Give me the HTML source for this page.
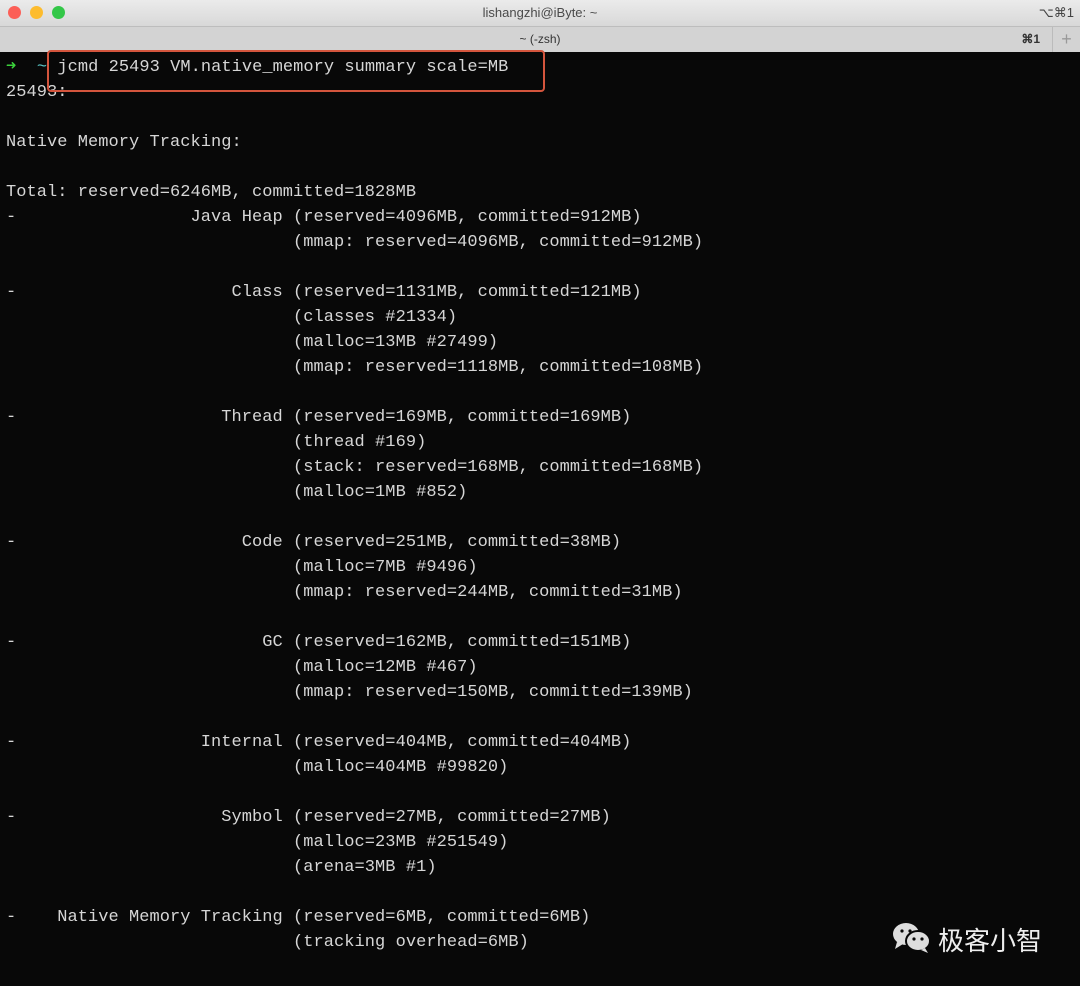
<!DOCTYPE html>
<html><head><meta charset="utf-8"><style>
html,body{margin:0;padding:0;width:1080px;height:986px;overflow:hidden;background:#0a0a0a}
.title{position:absolute;left:0;top:0;width:1080px;height:26px;background:linear-gradient(#ebebeb,#d8d8d8);font:13px "Liberation Sans",sans-serif;color:#4a4a4a;text-align:center;line-height:26px}
.dot{position:absolute;top:6px;width:13px;height:13px;border-radius:50%}
.tabs{position:absolute;left:0;top:26px;width:1080px;height:25px;background:#d3d3d3;border-top:1px solid #bdbdbd;border-bottom:1px solid #a8a8a8;font:12px "Liberation Sans",sans-serif;color:#333;line-height:25px;text-align:center}
.term{position:absolute;left:0;top:52px;width:1080px;height:934px;background:#080808}
pre{position:absolute;left:6px;top:3px;margin:0;font:17px/25px "Liberation Mono",monospace;color:#d6d6d6;letter-spacing:0.05px}
.box{position:absolute;left:47px;top:50px;width:494px;height:38px;border:2px solid #d4553d;border-radius:4px}
.wm{position:absolute;left:938px;top:921px;font:26px "Liberation Sans","Noto Sans CJK SC",sans-serif;color:#eee}
</style></head><body>
<div class="title">lishangzhi@iByte: ~
<div class="dot" style="left:8px;background:#fc5f57"></div>
<div class="dot" style="left:30px;background:#fdbc2e"></div>
<div class="dot" style="left:52px;background:#33c748"></div>
<span style="position:absolute;right:6px;top:0;color:#444">⌥⌘1</span></div>
<div class="tabs">~ (-zsh)<span style="position:absolute;right:40px;top:0;font-weight:bold">⌘1</span><span style="position:absolute;right:0;top:0;width:27px;height:25px;border-left:1px solid #bbb;color:#999;font-size:18px">+</span></div>
<div class="term">
<pre><span style="color:#3bd13b">➜</span>  <span style="color:#5ac7c7">~</span> jcmd 25493 VM.native_memory summary scale=MB
25493:

Native Memory Tracking:

Total: reserved=6246MB, committed=1828MB
-                 Java Heap (reserved=4096MB, committed=912MB)
                            (mmap: reserved=4096MB, committed=912MB)

-                     Class (reserved=1131MB, committed=121MB)
                            (classes #21334)
                            (malloc=13MB #27499)
                            (mmap: reserved=1118MB, committed=108MB)

-                    Thread (reserved=169MB, committed=169MB)
                            (thread #169)
                            (stack: reserved=168MB, committed=168MB)
                            (malloc=1MB #852)

-                      Code (reserved=251MB, committed=38MB)
                            (malloc=7MB #9496)
                            (mmap: reserved=244MB, committed=31MB)

-                        GC (reserved=162MB, committed=151MB)
                            (malloc=12MB #467)
                            (mmap: reserved=150MB, committed=139MB)

-                  Internal (reserved=404MB, committed=404MB)
                            (malloc=404MB #99820)

-                    Symbol (reserved=27MB, committed=27MB)
                            (malloc=23MB #251549)
                            (arena=3MB #1)

-    Native Memory Tracking (reserved=6MB, committed=6MB)
                            (tracking overhead=6MB)</pre>
</div>
<div class="box"></div>
<svg style="position:absolute;left:891px;top:921px" width="42" height="34" viewBox="0 0 42 34">
<ellipse cx="15" cy="13" rx="13" ry="11" fill="#ddd"/><path d="M6 21 L4 28 L12 23Z" fill="#ddd"/>
<ellipse cx="27" cy="20" rx="12" ry="10" fill="#ddd" stroke="#080808" stroke-width="2"/><path d="M34 27 L37 32 L30 29Z" fill="#ddd"/>
<circle cx="11" cy="10" r="1.6" fill="#080808"/><circle cx="19" cy="10" r="1.6" fill="#080808"/>
<circle cx="23" cy="18" r="1.6" fill="#080808"/><circle cx="31" cy="18" r="1.6" fill="#080808"/>
</svg>
<div class="wm">极客小智</div>
</body></html>
